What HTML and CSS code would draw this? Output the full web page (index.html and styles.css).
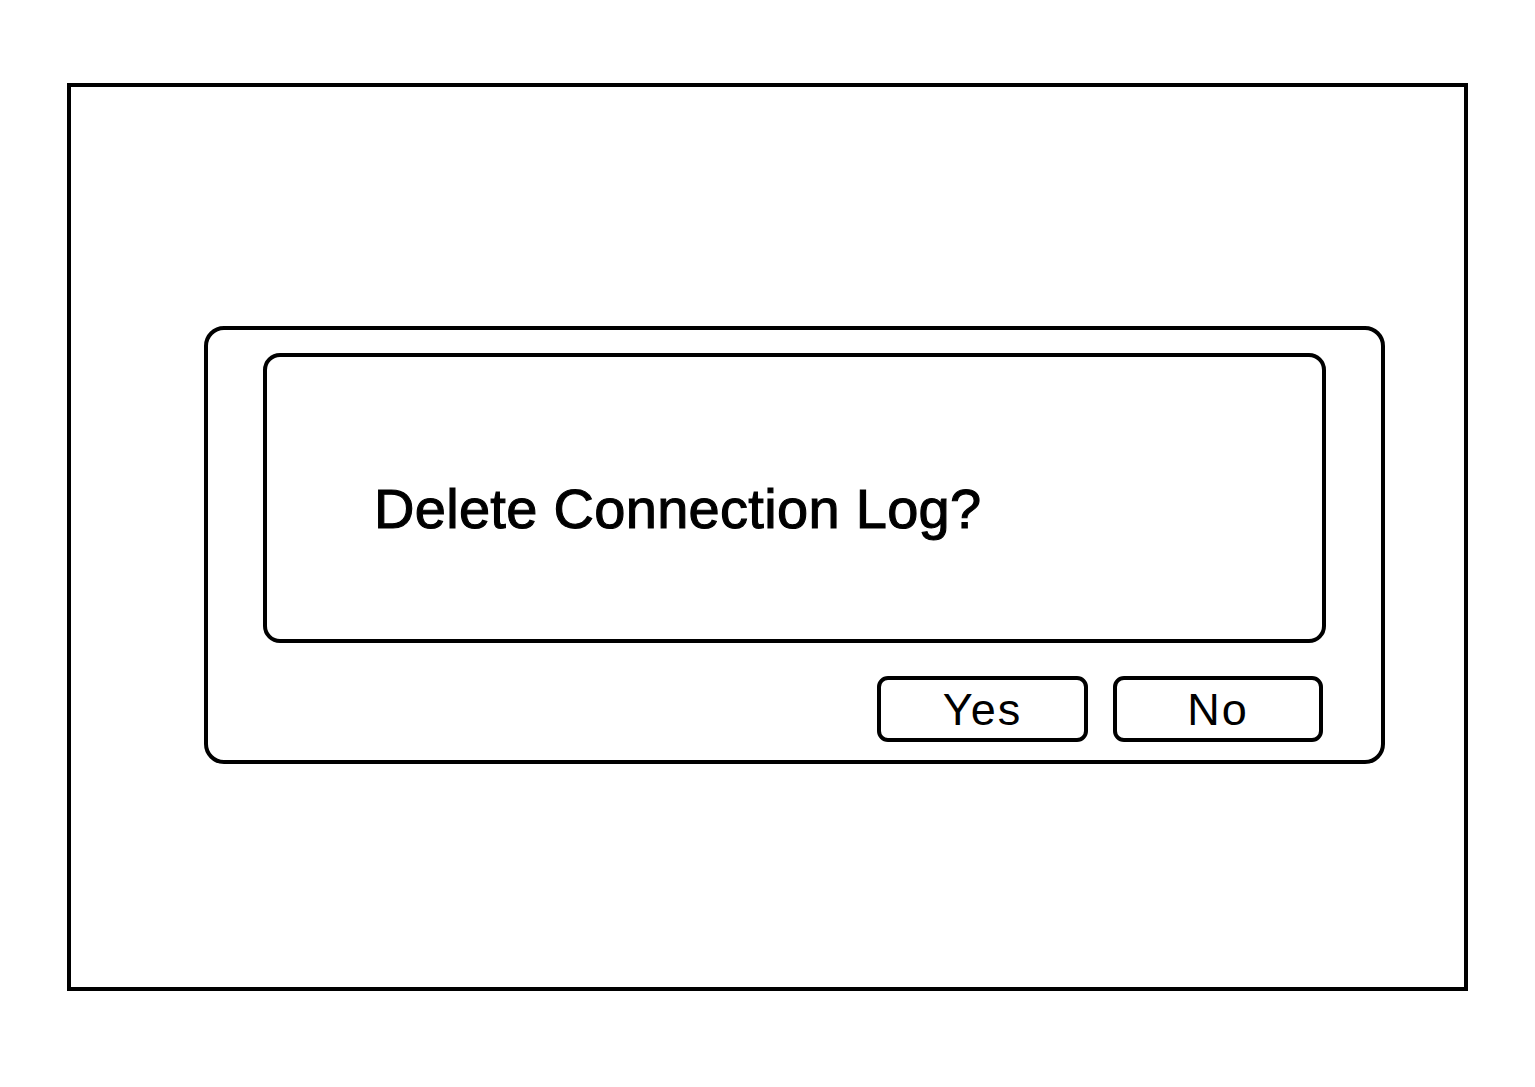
FILE: index.html
```html
<!DOCTYPE html>
<html>
<head>
<meta charset="utf-8">
<link rel="stylesheet" href="styles.css">
</head>
<body>
<div class="frame">
  <div class="dialog">
    <div class="message">
      <p class="question">Delete Connection Log?</p>
    </div>
    <div class="actions">
      <div class="btn btn-yes">Yes</div>
      <div class="btn btn-no">No</div>
    </div>
  </div>
</div>
</body>
</html>
```

FILE: styles.css
```css
html, body {
  margin: 0;
  padding: 0;
  background: #fff;
}
body {
  font-family: "Liberation Sans", Arial, sans-serif;
  color: #000;
}
.frame {
  box-sizing: border-box;
  margin: 83px 0 0 67px;
  width: 1401px;
  height: 908px;
  border: 4px solid #000;
  padding: 239px 0 0 133px;
}
.dialog {
  box-sizing: border-box;
  width: 1181px;
  height: 438px;
  border: 4px solid #000;
  border-radius: 20px;
  padding: 23px 55px 0 55px;
}
.message {
  box-sizing: border-box;
  height: 290px;
  border: 4px solid #000;
  border-radius: 17px;
  padding: 120px 0 0 107px;
}
.question {
  margin: 0;
  font-size: 56px;
  line-height: 64px;
  font-weight: 400;
  letter-spacing: 0.3px;
  -webkit-text-stroke: 1.1px #000;
}
.actions {
  display: flex;
  justify-content: flex-end;
  gap: 25px;
  margin-top: 33px;
  padding-right: 3px;
}
.btn {
  box-sizing: border-box;
  height: 66px;
  border: 4px solid #000;
  border-radius: 11px;
  display: flex;
  align-items: center;
  justify-content: center;
  font-size: 45px;
  line-height: 45px;
  letter-spacing: 2px;
}
.btn-yes { width: 211px; }
.btn-no { width: 210px; }
```
